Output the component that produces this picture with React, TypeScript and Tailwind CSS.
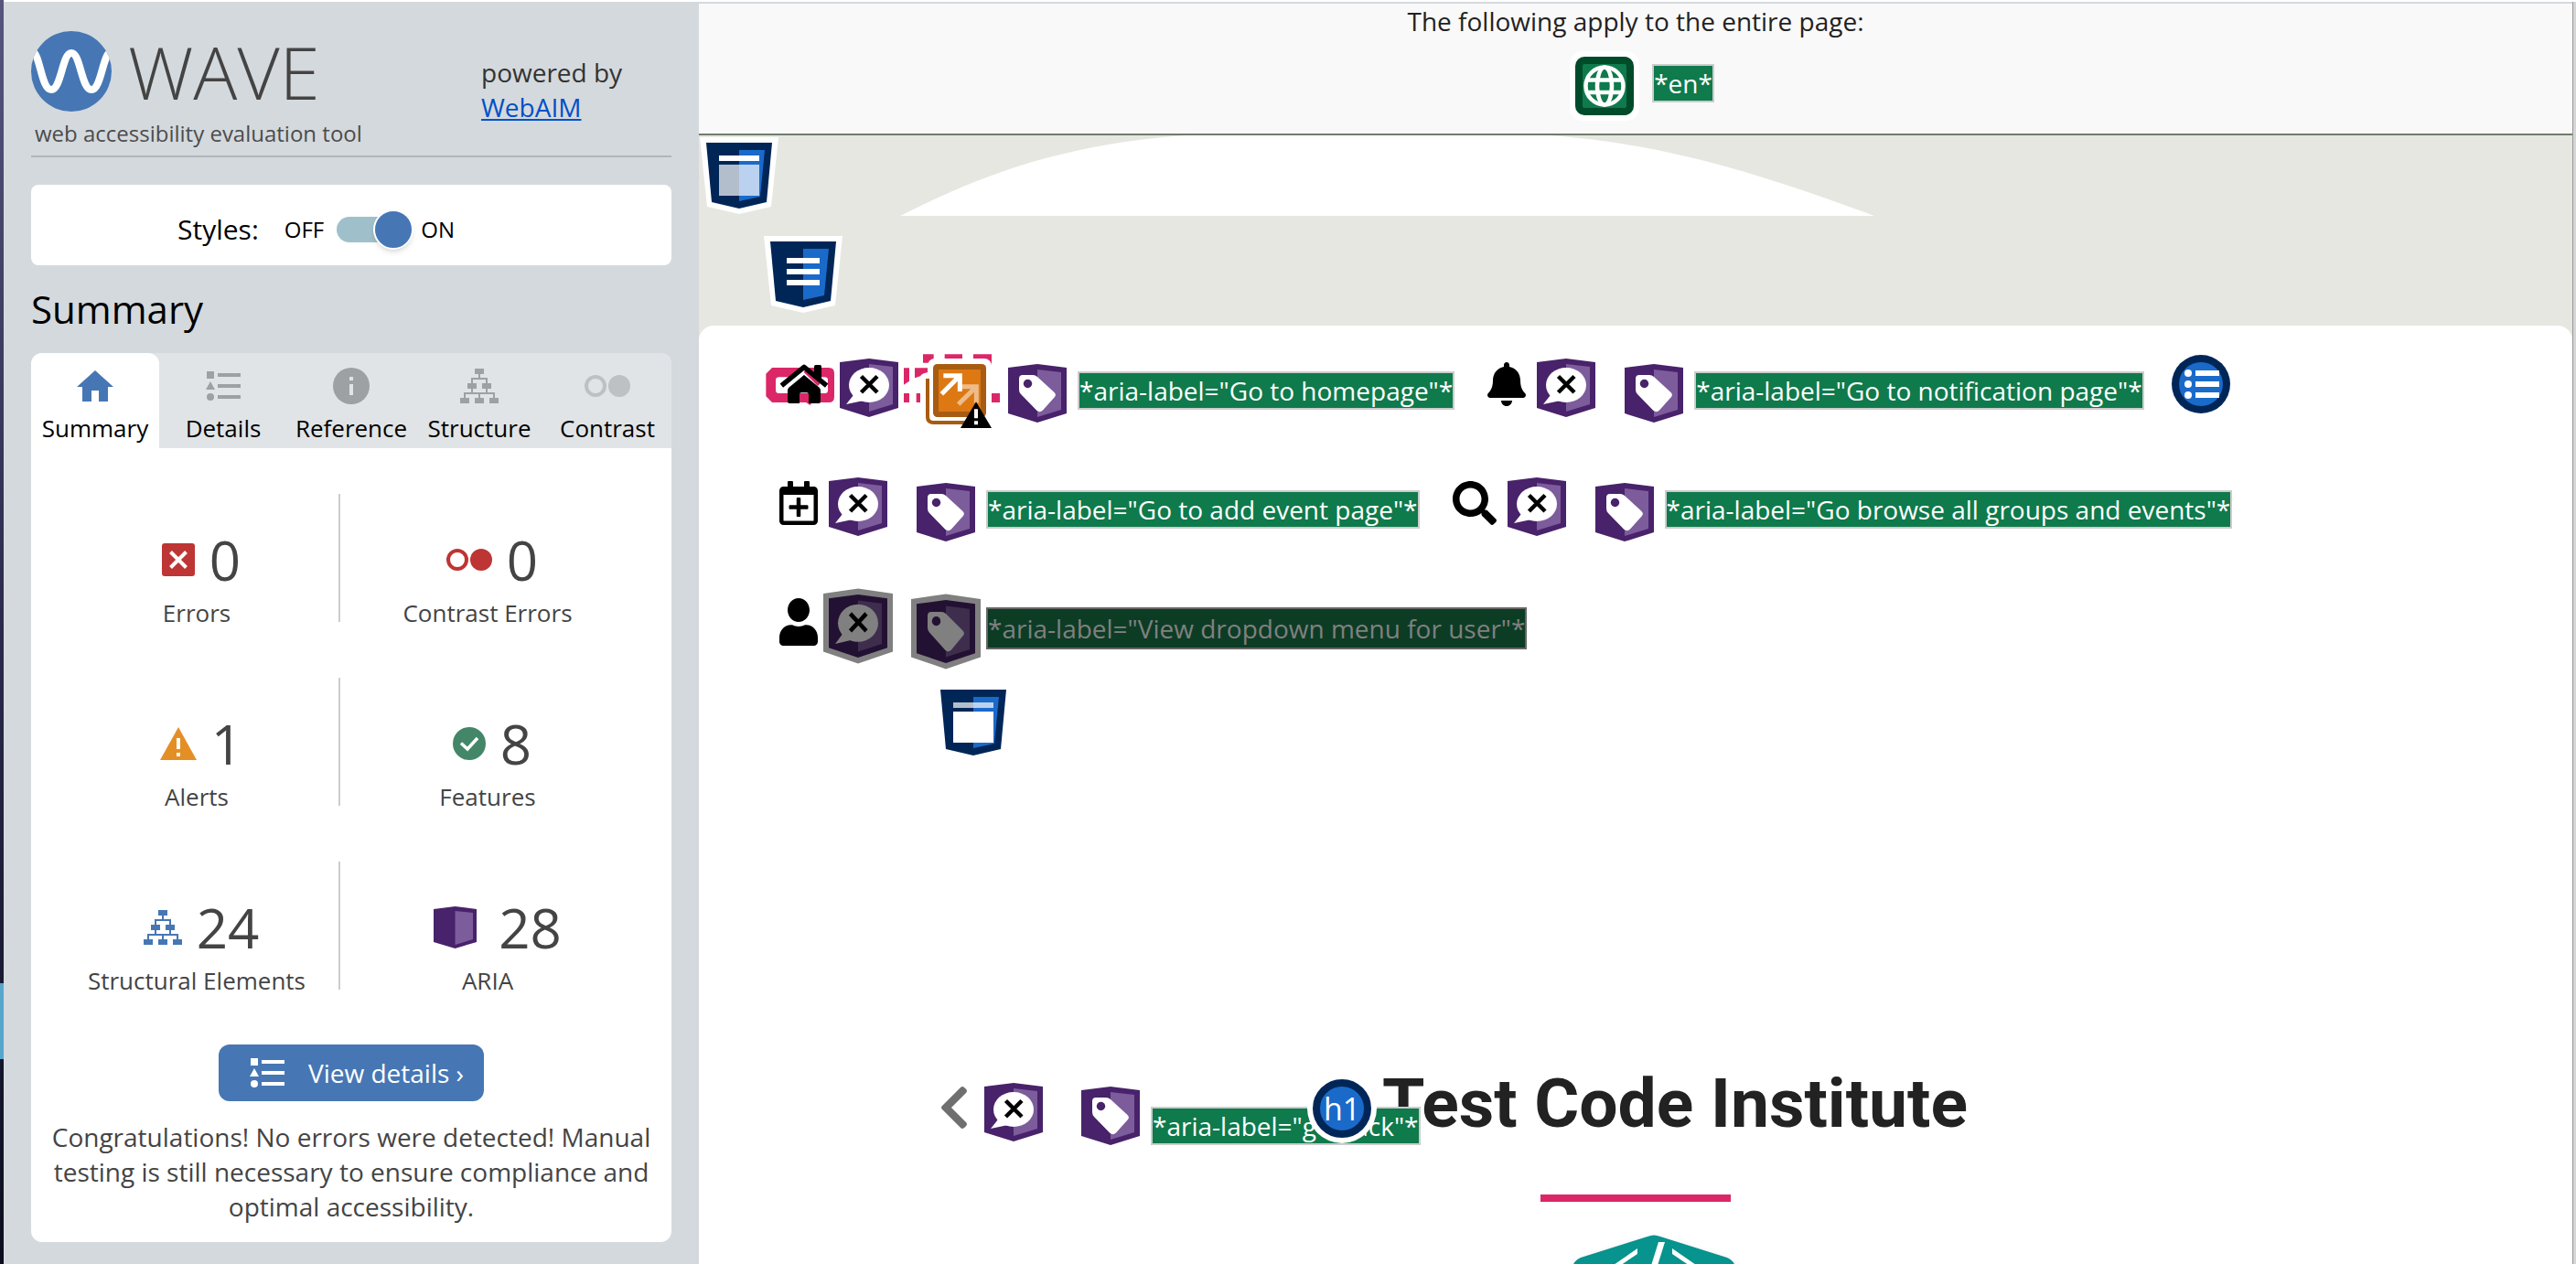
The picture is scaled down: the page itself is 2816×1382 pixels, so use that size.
import React from "react";
import { FaBell, FaChevronLeft, FaRegCalendarPlus, FaSearch, FaUser } from "react-icons/fa";

/* ---------- sidebar drawings ---------- */

function WaveLogo() {
  return (
    <svg viewBox="0 0 88 88" className="h-22 w-22 shrink-0" aria-hidden="true">
      <defs>
        <clipPath id="disc">
          <circle cx="44" cy="44" r="44" />
        </clipPath>
      </defs>
      <circle cx="44" cy="44" r="44" fill="#4677b4" />
      <path
        d="M1 22 C10 24 11 64 22 64 C33 64 34 24 44 24 C54 24 55 64 66 64 C77 64 78 24 88 22"
        fill="none"
        stroke="#fff"
        strokeWidth="8"
        clipPath="url(#disc)"
      />
    </svg>
  );
}

function HomeTabIcon() {
  return (
    <svg viewBox="0 0 40 34" className="h-[34px] w-10" aria-hidden="true">
      <path d="M20 0 L40 18 H34 V34 H24 V22 H16 V34 H6 V18 H0 Z" fill="#4677b4" />
    </svg>
  );
}

function ListIcon() {
  return (
    <svg viewBox="0 0 38 32" className="h-8 w-[38px]" fill="currentColor" aria-hidden="true">
      <path d="M1 0 H9 V8 H1 Z M5 11 L10 20 H0 Z M13 2 H38 V6 H13 Z M13 14 H38 V18 H13 Z M13 26 H38 V30 H13 Z" />
      <circle cx="5" cy="28" r="4" />
    </svg>
  );
}

function InfoIcon() {
  return (
    <svg viewBox="0 0 40 40" className="h-10 w-10" aria-hidden="true">
      <circle cx="20" cy="20" r="20" fill="#9da1a3" />
      <path d="M18 10 H22 V14 H18 Z M18 18 H22 V30 H18 Z" fill="#e0e4e6" />
    </svg>
  );
}

function TreeIcon() {
  return (
    <svg viewBox="0 0 42 38" className="h-[38px] w-[42px]" aria-hidden="true">
      <path
        d="M16 0 H26 V6 H16 Z M8 16 H18 V22 H8 Z M24 16 H34 V22 H24 Z M0 32 H10 V38 H0 Z M16 32 H26 V38 H16 Z M32 32 H42 V38 H32 Z"
        fill="currentColor"
      />
      <path
        d="M21 6 V11 M13 16 V11 H29 V16 M13 22 V27 M29 22 V27 M5 32 V27 H37 V32 M21 27 V32"
        fill="none"
        stroke="currentColor"
        strokeWidth="2"
      />
    </svg>
  );
}

function ContrastIcon() {
  return (
    <svg viewBox="0 0 50 24" className="h-6 w-[50px]" aria-hidden="true">
      <circle cx="12" cy="12" r="10" fill="none" stroke="currentColor" strokeWidth="4" />
      <circle cx="38" cy="12" r="12" fill="currentColor" />
    </svg>
  );
}

function ErrorIcon() {
  return (
    <svg viewBox="0 0 36 36" className="h-9 w-9" aria-hidden="true">
      <rect width="36" height="36" rx="3" fill="#bd3534" />
      <path d="M9.500 9.500 L26.500 26.500 M26.500 9.500 L9.500 26.500" stroke="#fff" strokeWidth="4" />
    </svg>
  );
}

function AlertIcon() {
  return (
    <svg viewBox="0 0 40 36" className="h-9 w-10" aria-hidden="true">
      <path d="M20 0 L40 36 H0 Z" fill="#e48f25" />
      <path d="M18 12 H22 V24 H18 Z M18 28 H22 V32 H18 Z" fill="#fff" />
    </svg>
  );
}

function FeatureIcon() {
  return (
    <svg viewBox="0 0 36 36" className="h-9 w-9" aria-hidden="true">
      <circle cx="18" cy="18" r="18" fill="#448668" />
      <path d="M9 17.500 L16 24 L27 12" fill="none" stroke="#fff" strokeWidth="3.500" />
    </svg>
  );
}

function AriaBoxIcon() {
  return (
    <svg viewBox="0 0 47 46" className="mr-2 ml-3 h-[46px] w-[47px]" aria-hidden="true">
      <path d="M0 3 L23.500 0 L47 3 V39 L23.500 46 L0 39 Z" fill="#48226a" />
      <path d="M23.500 5 L43 7 V36 L23.500 42 Z" fill="#7d5c9b" />
    </svg>
  );
}

/* ---------- page annotations ---------- */

function Shield({ kind }: { kind: "header" | "nav" | "main" }) {
  return (
    <svg viewBox="0 0 86 84" className="h-[84px] w-[86px] shrink-0" role="img" aria-label={kind}>
      <path d="M0 0 H86 L78 76 L43 84 L8 76 Z" fill="#fff" />
      <path d="M7 6 H79 L73 71 L43 78 L13 71 Z" fill="#002657" />
      <path d="M43 14 H71 L66 65 L43 70 Z" fill="#1a6ac9" />
      {kind === "header" && (
        <>
          <path d="M21 20 H65 V26 H21 Z" fill="#fff" />
          <path d="M21 30 H65 V64 H21 Z" fill="#fff" opacity=".7" />
        </>
      )}
      {kind === "nav" && <path d="M25 24 H61 V30 H25 Z M25 36 H61 V42 H25 Z M25 48 H61 V54 H25 Z" fill="#fff" />}
      {kind === "main" && (
        <>
          <path d="M21 20 H65 V26 H21 Z" fill="#fff" opacity=".7" />
          <path d="M21 30 H65 V64 H21 Z" fill="#fff" />
        </>
      )}
    </svg>
  );
}

type BadgeProps = { glyph: "hidden" | "tag"; dim?: boolean };

function AriaBadge({ glyph, dim }: BadgeProps) {
  const dark = dim ? "#231133" : "#48226a";
  const light = dim ? "#3f2d4e" : "#7d5c9b";
  const paper = dim ? "#808080" : "#fff";
  return (
    <svg
      viewBox="0 0 64 64"
      preserveAspectRatio="none"
      className={dim ? "h-[69px] w-16 shrink-0 overflow-visible" : "h-16 w-16 shrink-0"}
      role="img"
      aria-label={glyph}
    >
      {dim && <path d="M-6 -1 L32 -6 L70 -1 V58 L32 70 L-6 58 Z" fill="#808080" />}
      <path d="M0 4 L32 0 L64 4 V54 L32 64 L0 54 Z" fill={dark} />
      <path d="M32 6 L58 9 V50 L32 58 Z" fill={light} />
      {glyph === "hidden" ? (
        <>
          <ellipse cx="32" cy="29" rx="22" ry="19" fill={paper} />
          <path d="M15 40 L7 50 L26 46 Z" fill={paper} />
          <path d="M23.500 19.500 L41 37 M41 19.500 L23.500 37" stroke="#000" strokeWidth="4.500" />
        </>
      ) : (
        <>
          <path
            d="M12 16 Q12 12 16 12 H27 Q30 12 32 14 L50.500 31 Q53 33.500 51 36 L38 50.500 Q35 53.500 31.500 51 L14 33 Q12 31 12 28 Z"
            fill={paper}
          />
          <circle cx="21.500" cy="21.500" r="4.700" fill={dark} />
        </>
      )}
    </svg>
  );
}

function AltText({ children, dim }: { children: React.ReactNode; dim?: boolean }) {
  return (
    <span
      className={
        dim
          ? "border-2 border-[#666] bg-[#0d3c25] text-[28px] leading-[42px] whitespace-nowrap text-[#808080]"
          : "border-2 border-[#ccc] bg-[#0f7a4c] text-[28px] leading-[38px] whitespace-nowrap text-white"
      }
    >
      {children}
    </span>
  );
}

function BrandHome() {
  return (
    <svg viewBox="96 78 162 144" className="h-12 w-[54px] overflow-visible" aria-hidden="true">
      <path
        fillRule="evenodd"
        fill="#db2768"
        d="M72 96 H258 Q276 96 276 114 V192 Q276 210 258 210 H72 L52 190 V116 Z M96 127 Q84 127 84 137 V170 Q84 180 96 180 H244 Q255 180 255 170 V137 Q255 127 244 127 Z"
      />
      <path d="M97 172 L177 112 L252 172" fill="none" stroke="#fff" strokeWidth="14" />
      <path d="M180 106 L226 152 M165 190 L200 214" stroke="#db2768" strokeWidth="12" />
      <path
        d="M123 170 Q123 165 127 161 L177 120 L227 161 Q231 165 231 170 V207 Q231 213 225 213 H192 V184 Q192 178 186 178 H168 Q162 178 162 184 V213 H129 Q123 213 123 207 Z"
        fill="#000"
      />
      <path d="M210 92 Q210 87 215 87 H229 Q234 87 234 92 V136 L210 116 Z" fill="#000" />
      <path d="M103 155 L177 94 L251 155" fill="none" stroke="#000" strokeWidth="16" strokeLinejoin="round" />
    </svg>
  );
}

function RedundantLinkBadge() {
  return (
    <svg viewBox="504 48 318 252" className="ml-1.5 h-[84px] w-[106px] shrink-0" role="img" aria-label="redundant link">
      <path
        fill="#db2768"
        d="M567 52 H602 V72 L590 80 H567 Z M638 52 H696 V66 H638 Z M732 52 H792 V92 Q788 70 765 66 H732 Z M504 97 H522 V140 L504 152 Z M540 97 H582 V112 Q565 114 558 124 L540 130 Z M504 180 H522 V210 H504 Z M545 180 H558 V210 H545 Z M790 180 H819 V210 H790 Z"
      />
      <rect x="582" y="66" width="210" height="210" rx="24" fill="#fff" />
      <path d="M582 132 V258 Q582 276 602 276 H704" fill="none" stroke="#a85c11" strokeWidth="12" />
      <rect x="600" y="84" width="174" height="174" rx="14" fill="#a85c11" />
      <rect x="618" y="102" width="138" height="138" rx="3" fill="#dd7813" />
      <g fill="none" stroke="#fff" strokeWidth="15">
        <path d="M628 182 L688 122 M634 122 H688 V174" />
        <path d="M683 216 L742 158 M694 158 H742 V212" opacity=".5" />
      </g>
      <path d="M741 208 L792 294 H690 Z" fill="#000" />
      <path d="M735 232 H747 V262 H735 Z M735 271 H747 V283 H735 Z" fill="#fff" />
    </svg>
  );
}

function ListBadge() {
  return (
    <svg viewBox="0 0 64 64" className="h-16 w-16 shrink-0" role="img" aria-label="list">
      <circle cx="32" cy="32" r="32" fill="#002657" />
      <circle cx="32" cy="32" r="24" fill="#1a6ac9" />
      <path d="M26 17 H52 V23 H26 Z M26 29 H52 V35 H26 Z M26 41 H52 V47 H26 Z" fill="#fff" />
      <circle cx="18" cy="20" r="4" fill="#fff" />
      <circle cx="18" cy="32" r="4" fill="#fff" />
      <circle cx="18" cy="44" r="4" fill="#fff" />
    </svg>
  );
}

function LanguageBadge() {
  return (
    <svg viewBox="-6 -6 76 76" className="-m-1.5 h-19 w-19 shrink-0" role="img" aria-label="language">
      <rect x="-6" y="-6" width="76" height="76" rx="14" fill="#fff" />
      <rect width="64" height="64" rx="10" fill="#004c2a" />
      <rect x="8" y="8" width="48" height="48" rx="2" fill="#0f7a4c" />
      <g fill="none" stroke="#fff" strokeWidth="4.500">
        <circle cx="32" cy="32" r="20.500" />
        <ellipse cx="32" cy="32" rx="8" ry="20.500" />
        <path d="M13 25.500 H51 M13 39 H51" />
      </g>
    </svg>
  );
}

function HexLogo() {
  return (
    <svg viewBox="0 0 200 200" className="ml-10 h-50 w-50 overflow-visible" role="img" aria-label="Code Institute">
      <path
        d="M93 2 Q100 -1 107 2 L180 25 Q188 28 190 38 V140 Q190 150 180 156 L107 196 Q100 199 93 196 L20 156 Q10 150 10 140 V38 Q12 28 20 25 Z"
        fill="#07938e"
        className="drop-shadow-lg"
      />
      <path d="M105 8 H112 L102 40 H95 Z M82 15 V21 L48 44 H40 Z M120 15 V21 L154 44 H162 Z" fill="#fff" />
    </svg>
  );
}

/* ---------- sections ---------- */

const tabs = [
  { name: "Summary", icon: <HomeTabIcon />, tone: "" },
  { name: "Details", icon: <ListIcon />, tone: "text-[#9da1a3]" },
  { name: "Reference", icon: <InfoIcon />, tone: "" },
  { name: "Structure", icon: <TreeIcon />, tone: "text-[#9da1a3]" },
  { name: "Contrast", icon: <ContrastIcon />, tone: "text-[#bdc1c4]" },
];

const stats = [
  [
    { name: "Errors", value: 0, icon: <ErrorIcon /> },
    { name: "Contrast Errors", value: 0, icon: <ContrastIcon />, tone: "text-[#bd3534]" },
  ],
  [
    { name: "Alerts", value: 1, icon: <AlertIcon /> },
    { name: "Features", value: 8, icon: <FeatureIcon /> },
  ],
  [
    { name: "Structural Elements", value: 24, icon: <TreeIcon />, tone: "text-[#4677b4]" },
    { name: "ARIA", value: 28, icon: <AriaBoxIcon /> },
  ],
];

function Stat({ name, value, icon, tone }: { name: string; value: number; icon: React.ReactNode; tone?: string }) {
  return (
    <div className="flex flex-col items-center pt-9 text-[#444]">
      <div className="flex items-center gap-4 pl-2.5">
        <span className={tone}>{icon}</span>
        <span className="text-[60px] leading-[72px]">{value}</span>
      </div>
      <span className="mt-1 text-[26px] leading-9">{name}</span>
    </div>
  );
}

function Sidebar() {
  return (
    <aside className="mt-0.5 w-[760px] shrink-0 bg-[#d4d9dd] px-[30px] pt-8">
      <header className="flex justify-between border-b-2 border-[#b0b6bb] pb-2">
        <div>
          <div className="flex items-center gap-[18px]">
            <WaveLogo />
            <span className="text-[80px] leading-[88px] font-light text-[#444]">WAVE</span>
          </div>
          <p className="mt-2 pl-1 text-2xl leading-8 text-[#4c4c4c]">web accessibility evaluation tool</p>
        </div>
        <p className="w-[208px] pt-[26px] text-[28px] leading-[38px] text-[#333]">
          powered by
          <br />
          <a href="#webaim" className="text-[#0050c8] underline">
            WebAIM
          </a>
        </p>
      </header>

      <div className="mt-[30px] flex h-22 items-center rounded-lg bg-white pt-2.5 pl-40 text-black">
        <span id="styles-label" className="text-[30px] leading-10">
          Styles:
        </span>
        <label className="ml-7 flex items-center text-2xl">
          <span>OFF</span>
          <span className="relative mr-2.5 ml-[14px] flex h-7 w-[82px] items-center justify-end rounded-full bg-[#9fc0ca]">
            <input
              type="checkbox"
              role="switch"
              defaultChecked
              aria-labelledby="styles-label"
              className="absolute inset-0 h-full w-full cursor-pointer opacity-0"
            />
            <span className="-mr-0.5 h-11 w-11 shrink-0 rounded-full border-2 border-white bg-[#4677b4] shadow-md" />
          </span>
          <span>ON</span>
        </label>
      </div>

      <h2 className="my-5 text-[42px] leading-14 text-black">Summary</h2>

      <div className="rounded-xl bg-white">
        <div role="tablist" className="grid grid-cols-5 rounded-t-xl bg-[#e0e4e6]">
          {tabs.map((t, i) => (
            <button
              key={t.name}
              role="tab"
              aria-selected={i === 0}
              className={
                i === 0
                  ? "flex flex-col items-center rounded-t-xl bg-white pt-4 pb-1"
                  : "flex flex-col items-center pt-4 pb-1"
              }
            >
              <span className={`flex h-10 items-center ${t.tone}`}>{t.icon}</span>
              <span className="mt-2 text-[26px] leading-9 text-black">{t.name}</span>
            </button>
          ))}
        </div>

        <div className="flex flex-col gap-[53px] pt-[50px] pr-10 pl-[26px]">
          {stats.map((row) => (
            <div key={row[0].name} className="grid h-[148px] grid-cols-[310px_2px_1fr]">
              <Stat {...row[0]} />
              <div className="h-[140px] bg-[#ccc]" />
              <Stat {...row[1]} />
            </div>
          ))}
        </div>

        <div className="flex flex-col items-center px-5 pt-[52px] pb-5">
          <button className="flex h-[62px] items-center gap-[26px] rounded-xl bg-[#4677b4] pr-[22px] pl-[34px] text-[28px] text-white">
            <ListIcon />
            View details ›
          </button>
          <p className="mt-5 text-center text-[28px] leading-[38px] text-[#444]">
            Congratulations! No errors were detected! Manual testing is still necessary to ensure compliance and optimal
            accessibility.
          </p>
        </div>
      </div>
    </aside>
  );
}

function NavItem({
  icon,
  extra,
  text,
  dim,
}: {
  icon: React.ReactNode;
  extra?: React.ReactNode;
  text: string;
  dim?: boolean;
}) {
  return (
    <a href="#nav" className="flex items-start text-black">
      <span className="mt-1 mr-3">{icon}</span>
      <AriaBadge glyph="hidden" dim={dim} />
      {extra ? <span className="-my-1.5 mr-2">{extra}</span> : <span className="w-8" />}
      <span className="mt-1.5 mr-3">
        <AriaBadge glyph="tag" dim={dim} />
      </span>
      <span className="mt-3.5 flex">
        <AltText dim={dim}>{text}</AltText>
      </span>
    </a>
  );
}

function PageView() {
  return (
    <main className="mt-1 flex min-w-0 flex-1 flex-col bg-[#e6e7e0]">
      <header className="flex h-36 shrink-0 flex-col items-center border-b-2 border-[#707d6c] bg-[#f9f9f9]">
        <p className="text-[28px] leading-[38px] text-[#222]">The following apply to the entire page:</p>
        <div className="mt-5 flex items-start gap-5 pl-5">
          <LanguageBadge />
          <span className="mt-2 flex">
            <AltText>*en*</AltText>
          </span>
        </div>
      </header>

      <div className="relative flex h-[208px] shrink-0 flex-col items-start gap-6 pt-0.5 pl-px">
        <svg
          viewBox="0 0 1065 88"
          preserveAspectRatio="none"
          className="absolute top-0 left-[10.75%] h-22 w-[52%]"
          aria-hidden="true"
        >
          <path d="M0 88 C80 48 170 10 313 0 H711 C840 10 940 42 1065 88 Z" fill="#fff" />
        </svg>
        <Shield kind="header" />
        <div className="pl-[70px]">
          <Shield kind="nav" />
        </div>
      </div>

      <div className="min-h-0 flex-1 overflow-hidden rounded-t-2xl bg-white pt-9">
        <nav className="flex flex-col pl-22">
          <div className="flex h-[130px] items-start gap-9">
            <NavItem icon={<BrandHome />} extra={<RedundantLinkBadge />} text={'*aria-label="Go to homepage"*'} />
            <NavItem icon={<FaBell className="h-12 w-[42px]" />} text={'*aria-label="Go to notification page"*'} />
            <div className="-mt-1 -ml-1.5">
              <ListBadge />
            </div>
          </div>
          <div className="flex h-32 items-start gap-9">
            <NavItem
              icon={<FaRegCalendarPlus className="h-12 w-[42px]" />}
              text={'*aria-label="Go to add event page"*'}
            />
            <NavItem icon={<FaSearch className="h-12 w-12" />} text={'*aria-label="Go browse all groups and events"*'} />
          </div>
          <div className="flex h-[98px] items-start">
            <NavItem
              dim
              icon={<FaUser className="h-[52px] w-[42px]" preserveAspectRatio="none" />}
              text={'*aria-label="View dropdown menu for user"*'}
            />
          </div>
        </nav>

        <div className="pl-[257px]">
          <Shield kind="main" />
        </div>

        <section className="relative mt-[330px] flex flex-col items-center">
          <h1 className="flex items-center gap-1.5 pl-1 text-[#222]">
            <span className="z-10 mt-3 flex h-19 w-19 items-center justify-center rounded-full bg-white">
              <span className="flex h-16 w-16 items-center justify-center rounded-full border-8 border-[#002657] bg-[#1a6ac9] text-[34px] text-white">
                h1
              </span>
            </span>
            <span className="font-[Roboto] text-[75px] leading-[88px] font-bold">Test Code Institute</span>
          </h1>
          <a href="#back" className="absolute top-[22px] left-[260px] flex items-start">
            <FaChevronLeft className="mr-3.5 h-[54px] w-[38px] text-[#6f6f6f]" />
            <AriaBadge glyph="hidden" />
            <span className="mt-1 mr-3 ml-[42px]">
              <AriaBadge glyph="tag" />
            </span>
            <span className="mt-[26px] flex">
              <AltText>*aria-label="go back"*</AltText>
            </span>
          </a>
          <hr className="mt-14 h-2 w-[208px] border-0 bg-[#db2768]" />
          <div className="mt-9">
            <HexLogo />
          </div>
        </section>
      </div>
    </main>
  );
}

export default function App() {
  return (
    <div className="flex h-screen overflow-hidden bg-[linear-gradient(#fff_2px,#d4d9dd_2px)] font-['Open_Sans',sans-serif]">
      <div className="flex w-1 shrink-0 flex-col bg-linear-to-b from-[#55557f] via-[#2b2a4c] to-[#0c0e1f]">
        <div className="mt-[1075px] h-[83px] bg-[#58a6cb]" />
      </div>
      <Sidebar />
      <PageView />
      <div className="mt-0.5 w-1 shrink-0 border-l border-[#999] bg-[#d6d6d6]" />
    </div>
  );
}
